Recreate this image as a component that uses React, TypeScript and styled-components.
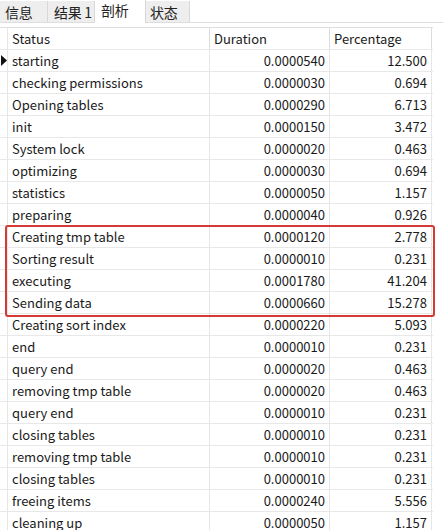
import styled, { createGlobalStyle } from "styled-components";

const GlobalStyle = createGlobalStyle`
  html, body {
    margin: 0;
    padding: 0;
    background: #ffffff;
  }
  body {
    font-family: "Noto Sans CJK SC", "Noto Sans", sans-serif;
    color: #1a1a1a;
  }
`;

const rows = [
  ["starting", "0.0000540", "12.500"],
  ["checking permissions", "0.0000030", "0.694"],
  ["Opening tables", "0.0000290", "6.713"],
  ["init", "0.0000150", "3.472"],
  ["System lock", "0.0000020", "0.463"],
  ["optimizing", "0.0000030", "0.694"],
  ["statistics", "0.0000050", "1.157"],
  ["preparing", "0.0000040", "0.926"],
  ["Creating tmp table", "0.0000120", "2.778"],
  ["Sorting result", "0.0000010", "0.231"],
  ["executing", "0.0001780", "41.204"],
  ["Sending data", "0.0000660", "15.278"],
  ["Creating sort index", "0.0000220", "5.093"],
  ["end", "0.0000010", "0.231"],
  ["query end", "0.0000020", "0.463"],
  ["removing tmp table", "0.0000020", "0.463"],
  ["query end", "0.0000010", "0.231"],
  ["closing tables", "0.0000010", "0.231"],
  ["removing tmp table", "0.0000010", "0.231"],
  ["closing tables", "0.0000010", "0.231"],
  ["freeing items", "0.0000240", "5.556"],
  ["cleaning up", "0.0000050", "1.157"],
];

const tabs = [
  { label: "信息", w: 48, pad: 5 },
  { label: "结果 1", w: 47, pad: 6 },
  { label: "剖析", w: 51, pad: 6 },
  { label: "状态", w: 44, pad: 4 },
];

const Page = styled.div`
  width: 443px;
  height: 530px;
  overflow: hidden;
  background: #fff;
`;

const TabBar = styled.div`
  display: flex;
  align-items: flex-end;
  height: 22px;
  border-bottom: 1px solid #dedede;
`;

const Tab = styled.div<{ $active?: boolean; $w: number; $pad: number }>`
  box-sizing: border-box;
  flex: 0 0 ${(p) => p.$w}px;
  height: ${(p) => (p.$active ? "23px" : "21px")};
  margin-bottom: ${(p) => (p.$active ? "-1px" : "0")};
  padding-left: ${(p) => p.$pad}px;
  padding-bottom: ${(p) => (p.$active ? "3px" : "0")};
  display: flex;
  align-items: center;
  font-size: 14px;
  letter-spacing: -0.3px;
  white-space: nowrap;
  background: ${(p) => (p.$active ? "#ffffff" : "#eeeeee")};
  border-right: 1px solid #d8d8d8;
  color: #222;
`;

const TableWrap = styled.div`
  position: relative;
  margin-top: 4px;
  width: 433px;
  border-top: 1px solid #dedede;
`;

const Row = styled.div`
  display: grid;
  grid-template-columns: 8px 202px 120px 102px;
  height: 22px;
  box-sizing: border-box;
  border-bottom: 1px solid #e8e8e8;
  font-size: 13px;
`;

const Gutter = styled.div`
  border-right: 1px solid #e6e6e6;
  display: flex;
  align-items: center;
`;

const Cell = styled.div<{ $num?: boolean }>`
  display: flex;
  align-items: center;
  justify-content: ${(p) => (p.$num ? "flex-end" : "flex-start")};
  padding: ${(p) => (p.$num ? "0 4px 0 0" : "0 0 0 4px")};
  border-right: 1px solid #e6e6e6;
  white-space: nowrap;
  overflow: hidden;
`;

const HeadCell = styled(Cell)`
  justify-content: flex-start;
  padding: 0 0 0 4px;
  border-right: 1px solid #dcdcdc;
`;

const Highlight = styled.div`
  position: absolute;
  left: 5px;
  top: 197px;
  width: 426px;
  height: 88px;
  border: 2px solid #d63a36;
  border-radius: 3px;
  pointer-events: none;
`;

const Arrow = () => (
  <svg width="7" height="11" viewBox="0 0 7 11">
    <polygon points="1,0 7,5.5 1,11" fill="#111" />
  </svg>
);

export default function App() {
  return (
    <Page>
      <GlobalStyle />
      <TabBar>
        {tabs.map((t, i) => (
          <Tab key={t.label} $active={i === 2} $w={t.w} $pad={t.pad}>
            {t.label}
          </Tab>
        ))}
      </TabBar>
      <TableWrap>
        <Row>
          <Gutter />
          <HeadCell>Status</HeadCell>
          <HeadCell>Duration</HeadCell>
          <HeadCell>Percentage</HeadCell>
        </Row>
        {rows.map((r, i) => (
          <Row key={i}>
            <Gutter>{i === 0 && <Arrow />}</Gutter>
            <Cell>{r[0]}</Cell>
            <Cell $num>{r[1]}</Cell>
            <Cell $num>{r[2]}</Cell>
          </Row>
        ))}
        <Highlight />
      </TableWrap>
    </Page>
  );
}
